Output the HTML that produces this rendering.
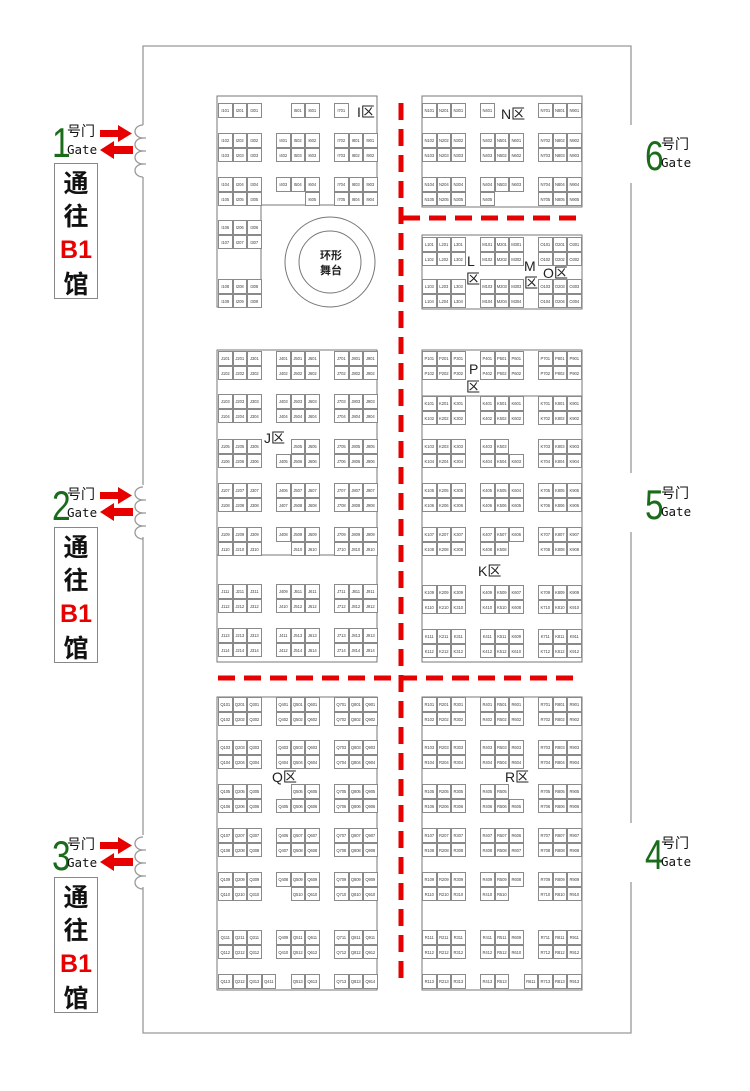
<!DOCTYPE html>
<html><head><meta charset="utf-8">
<style>
*{margin:0;padding:0;box-sizing:border-box}
body{width:750px;height:1091px;background:#fff;position:relative;overflow:hidden;font-family:"Liberation Sans","Noto Sans CJK SC",sans-serif}
svg.bg{position:absolute;left:0;top:0}
.r{position:absolute;display:flex;height:14.5px}
.r i,.r u{display:block;width:14.5px;height:14.5px;flex:none;font-style:normal;text-decoration:none}
.r i{border:0.7px solid #8a8a8a;font-size:4.2px;line-height:13px;text-align:center;color:#444;letter-spacing:-0.1px;background:#fff}
.t{position:absolute;font-size:14px;color:#222;line-height:1;font-family:"Liberation Sans","Noto Sans CJK SC",sans-serif}
.g{position:absolute;color:#1a6b1a;font-size:42px;line-height:1;font-family:"Liberation Sans",sans-serif;transform:scaleX(0.8);transform-origin:left top}
.h{position:absolute;font-size:14px;line-height:1;color:#111;font-family:"Noto Sans CJK SC",sans-serif}
.ga{position:absolute;font-size:12.5px;line-height:1;color:#111;font-family:"DejaVu Sans Mono","Liberation Mono",monospace}
.box{position:absolute;left:54px;width:44px;height:136px;border:1px solid #888;text-align:center;font-family:"Noto Sans CJK SC",sans-serif;font-weight:bold;font-size:25px;line-height:33px;padding-top:2px;color:#111}
.box b{color:#e60000;font-family:"Liberation Sans",sans-serif}
</style></head><body>
<svg class="bg" width="750" height="1091" viewBox="0 0 750 1091">
<g fill="none" stroke="#999" stroke-width="1.3">
<path d="M143 125 V46 H631 V125 M631 183 V473 M631 532 V823 M631 882 V1033 H143 V887 M143 835 V537 M143 485 V177"/>
<g id="bm"><path d="M143 125 a8 6.5 0 0 0 0 13 a8 6.5 0 0 0 0 13 a8 6.5 0 0 0 0 13 a8 6.5 0 0 0 0 13"/><path d="M140 138 h6 M140 151 h6 M140 164 h6"/></g>
<use href="#bm" y="362"/><use href="#bm" y="712"/>
</g>
<g fill="none" stroke="#777" stroke-width="1">
<path d="M217 96 H377 V205 H261 V307 H217 Z"/>
<rect x="422" y="96" width="160" height="111"/>
<rect x="422" y="235" width="160" height="74"/>
<rect x="217" y="350" width="160" height="312"/>
<path d="M217 555 H377"/>
<rect x="422" y="350" width="160" height="312"/>
<path d="M422 396 H582"/>
<rect x="217" y="697" width="160" height="293"/>
<rect x="422" y="697" width="160" height="293"/>
<circle cx="330" cy="262" r="45"/><circle cx="330" cy="262" r="31"/>
</g>
<g stroke="#e60000" stroke-width="5" stroke-dasharray="17 9" fill="none">
<path d="M401 103 V985"/>
<path d="M403 218 H576"/>
<path d="M218 678 H576"/>
</g>
<g fill="#e60000" id="ar">
<path d="M100 130 H118 V125 L132 133.5 L118 142 V137 H100 Z"/>
<path d="M133 146 H114 V141 L100 150 L114 159 V154 H133 Z"/>
</g>
<use href="#ar" y="362"/><use href="#ar" y="712"/>
</svg>

<div class="g" style="left:52px;top:122px">1</div><div class="h" style="left:67px;top:124px">号门</div><div class="ga" style="left:67px;top:144px">Gate</div>
<div class="box" style="top:163px">通<br>往<br><b>B1</b><br>馆</div>
<div class="g" style="left:52px;top:485px">2</div><div class="h" style="left:67px;top:487px">号门</div><div class="ga" style="left:67px;top:507px">Gate</div>
<div class="box" style="top:527px">通<br>往<br><b>B1</b><br>馆</div>
<div class="g" style="left:52px;top:835px">3</div><div class="h" style="left:67px;top:837px">号门</div><div class="ga" style="left:67px;top:857px">Gate</div>
<div class="box" style="top:877px">通<br>往<br><b>B1</b><br>馆</div>

<div class="g" style="left:645px;top:135px">6</div><div class="h" style="left:661px;top:137px">号门</div><div class="ga" style="left:661px;top:157px">Gate</div>
<div class="g" style="left:645px;top:484px">5</div><div class="h" style="left:661px;top:486px">号门</div><div class="ga" style="left:661px;top:506px">Gate</div>
<div class="g" style="left:645px;top:834px">4</div><div class="h" style="left:661px;top:836px">号门</div><div class="ga" style="left:661px;top:856px">Gate</div>

<div class="t" style="left:320px;top:248px;font-size:11px;font-weight:bold;line-height:15px;text-align:center;font-family:'Noto Sans CJK SC',sans-serif">环形<br>舞台</div>
<div class="t" style="left:357px;top:105px">I区</div>
<div class="t" style="left:501px;top:107px">N区</div>
<div class="t" style="left:467px;top:254px">L</div><div class="t" style="left:466px;top:272px">区</div>
<div class="t" style="left:524px;top:259px">M</div><div class="t" style="left:524px;top:276px">区</div>
<div class="t" style="left:543px;top:266px">O区</div>
<div class="t" style="left:264px;top:431px">J区</div>
<div class="t" style="left:469px;top:362px">P</div><div class="t" style="left:466px;top:380px">区</div>
<div class="t" style="left:478px;top:564px">K区</div>
<div class="t" style="left:272px;top:770px">Q区</div>
<div class="t" style="left:505px;top:770px">R区</div>

<!-- I -->
<div class="r" style="left:218px;top:103px"><i>I101</i><i>I201</i><i>I301</i><u></u><u></u><i>I501</i><i>I601</i><u></u><i>I701</i></div>
<div class="r" style="left:218px;top:133px"><i>I102</i><i>I202</i><i>I302</i><u></u><i>I401</i><i>I502</i><i>I602</i><u></u><i>I702</i><i>I801</i><i>I901</i></div>
<div class="r" style="left:218px;top:147.5px"><i>I103</i><i>I203</i><i>I303</i><u></u><i>I402</i><i>I503</i><i>I603</i><u></u><i>I703</i><i>I802</i><i>I902</i></div>
<div class="r" style="left:218px;top:177px"><i>I104</i><i>I204</i><i>I304</i><u></u><i>I403</i><i>I504</i><i>I604</i><u></u><i>I704</i><i>I803</i><i>I903</i></div>
<div class="r" style="left:218px;top:191.5px"><i>I105</i><i>I205</i><i>I305</i><u></u><u></u><u></u><i>I605</i><u></u><i>I705</i><i>I804</i><i>I904</i></div>
<div class="r" style="left:218px;top:220px"><i>I106</i><i>I206</i><i>I306</i></div>
<div class="r" style="left:218px;top:234.5px"><i>I107</i><i>I207</i><i>I307</i></div>
<div class="r" style="left:218px;top:279px"><i>I108</i><i>I208</i><i>I308</i></div>
<div class="r" style="left:218px;top:293.5px"><i>I109</i><i>I209</i><i>I309</i></div>
<!-- N -->
<div class="r" style="left:422px;top:103px"><i>N101</i><i>N201</i><i>N301</i><u></u><i>N401</i><u></u><u></u><u></u><i>N701</i><i>N801</i><i>N901</i></div>
<div class="r" style="left:422px;top:133px"><i>N102</i><i>N202</i><i>N302</i><u></u><i>N402</i><i>N501</i><i>N601</i><u></u><i>N702</i><i>N802</i><i>N902</i></div>
<div class="r" style="left:422px;top:147.5px"><i>N103</i><i>N203</i><i>N303</i><u></u><i>N403</i><i>N502</i><i>N602</i><u></u><i>N703</i><i>N803</i><i>N903</i></div>
<div class="r" style="left:422px;top:177px"><i>N104</i><i>N204</i><i>N304</i><u></u><i>N404</i><i>N503</i><i>N603</i><u></u><i>N704</i><i>N804</i><i>N904</i></div>
<div class="r" style="left:422px;top:191.5px"><i>N105</i><i>N205</i><i>N305</i><u></u><i>N405</i><u></u><u></u><u></u><i>N705</i><i>N805</i><i>N905</i></div>
<!-- LMO -->
<div class="r" style="left:422px;top:237px"><i>L101</i><i>L201</i><i>L301</i><u></u><i>M101</i><i>M201</i><i>M301</i><u></u><i>O101</i><i>O201</i><i>O301</i></div>
<div class="r" style="left:422px;top:251.5px"><i>L102</i><i>L202</i><i>L302</i><u></u><i>M102</i><i>M202</i><i>M302</i><u></u><i>O102</i><i>O202</i><i>O302</i></div>
<div class="r" style="left:422px;top:279px"><i>L103</i><i>L203</i><i>L303</i><u></u><i>M103</i><i>M203</i><i>M303</i><u></u><i>O103</i><i>O203</i><i>O303</i></div>
<div class="r" style="left:422px;top:293.5px"><i>L104</i><i>L204</i><i>L304</i><u></u><i>M104</i><i>M204</i><i>M304</i><u></u><i>O104</i><i>O204</i><i>O304</i></div>
<!-- J -->
<div class="r" style="left:218px;top:351px"><i>J101</i><i>J201</i><i>J301</i><u></u><i>J401</i><i>J501</i><i>J601</i><u></u><i>J701</i><i>J801</i><i>J901</i></div>
<div class="r" style="left:218px;top:365.5px"><i>J102</i><i>J202</i><i>J302</i><u></u><i>J402</i><i>J502</i><i>J602</i><u></u><i>J702</i><i>J802</i><i>J902</i></div>
<div class="r" style="left:218px;top:394px"><i>J103</i><i>J203</i><i>J303</i><u></u><i>J403</i><i>J503</i><i>J603</i><u></u><i>J703</i><i>J803</i><i>J903</i></div>
<div class="r" style="left:218px;top:408.5px"><i>J104</i><i>J204</i><i>J304</i><u></u><i>J404</i><i>J504</i><i>J604</i><u></u><i>J704</i><i>J804</i><i>J904</i></div>
<div class="r" style="left:218px;top:439px"><i>J105</i><i>J205</i><i>J305</i><u></u><u></u><i>J505</i><i>J605</i><u></u><i>J705</i><i>J805</i><i>J905</i></div>
<div class="r" style="left:218px;top:453.5px"><i>J106</i><i>J206</i><i>J306</i><u></u><i>J405</i><i>J506</i><i>J606</i><u></u><i>J706</i><i>J806</i><i>J906</i></div>
<div class="r" style="left:218px;top:483px"><i>J107</i><i>J207</i><i>J307</i><u></u><i>J406</i><i>J507</i><i>J607</i><u></u><i>J707</i><i>J807</i><i>J907</i></div>
<div class="r" style="left:218px;top:497.5px"><i>J108</i><i>J208</i><i>J308</i><u></u><i>J407</i><i>J508</i><i>J608</i><u></u><i>J708</i><i>J808</i><i>J908</i></div>
<div class="r" style="left:218px;top:527px"><i>J109</i><i>J209</i><i>J309</i><u></u><i>J408</i><i>J509</i><i>J609</i><u></u><i>J709</i><i>J809</i><i>J909</i></div>
<div class="r" style="left:218px;top:541.5px"><i>J110</i><i>J210</i><i>J310</i><u></u><u></u><i>J510</i><i>J610</i><u></u><i>J710</i><i>J810</i><i>J910</i></div>
<div class="r" style="left:218px;top:584px"><i>J111</i><i>J211</i><i>J311</i><u></u><i>J409</i><i>J511</i><i>J611</i><u></u><i>J711</i><i>J811</i><i>J911</i></div>
<div class="r" style="left:218px;top:598.5px"><i>J112</i><i>J212</i><i>J312</i><u></u><i>J410</i><i>J512</i><i>J612</i><u></u><i>J712</i><i>J812</i><i>J912</i></div>
<div class="r" style="left:218px;top:628px"><i>J113</i><i>J213</i><i>J313</i><u></u><i>J411</i><i>J513</i><i>J613</i><u></u><i>J713</i><i>J813</i><i>J913</i></div>
<div class="r" style="left:218px;top:642.5px"><i>J114</i><i>J214</i><i>J314</i><u></u><i>J412</i><i>J514</i><i>J614</i><u></u><i>J714</i><i>J814</i><i>J914</i></div>
<!-- P K -->
<div class="r" style="left:422px;top:351px"><i>P101</i><i>P201</i><i>P301</i><u></u><i>P401</i><i>P501</i><i>P601</i><u></u><i>P701</i><i>P801</i><i>P901</i></div>
<div class="r" style="left:422px;top:365.5px"><i>P102</i><i>P202</i><i>P302</i><u></u><i>P402</i><i>P502</i><i>P602</i><u></u><i>P702</i><i>P802</i><i>P902</i></div>
<div class="r" style="left:422px;top:396px"><i>K101</i><i>K201</i><i>K301</i><u></u><i>K401</i><i>K501</i><i>K601</i><u></u><i>K701</i><i>K801</i><i>K901</i></div>
<div class="r" style="left:422px;top:410.5px"><i>K102</i><i>K202</i><i>K302</i><u></u><i>K402</i><i>K502</i><i>K602</i><u></u><i>K702</i><i>K802</i><i>K902</i></div>
<div class="r" style="left:422px;top:439px"><i>K103</i><i>K203</i><i>K303</i><u></u><i>K403</i><i>K503</i><u></u><u></u><i>K703</i><i>K803</i><i>K903</i></div>
<div class="r" style="left:422px;top:453.5px"><i>K104</i><i>K204</i><i>K304</i><u></u><i>K404</i><i>K504</i><i>K603</i><u></u><i>K704</i><i>K804</i><i>K904</i></div>
<div class="r" style="left:422px;top:483px"><i>K105</i><i>K205</i><i>K305</i><u></u><i>K405</i><i>K505</i><i>K604</i><u></u><i>K705</i><i>K805</i><i>K905</i></div>
<div class="r" style="left:422px;top:497.5px"><i>K106</i><i>K206</i><i>K306</i><u></u><i>K406</i><i>K506</i><i>K605</i><u></u><i>K706</i><i>K806</i><i>K906</i></div>
<div class="r" style="left:422px;top:527px"><i>K107</i><i>K207</i><i>K307</i><u></u><i>K407</i><i>K507</i><i>K606</i><u></u><i>K707</i><i>K807</i><i>K907</i></div>
<div class="r" style="left:422px;top:541.5px"><i>K108</i><i>K208</i><i>K308</i><u></u><i>K408</i><i>K508</i><u></u><u></u><i>K708</i><i>K808</i><i>K908</i></div>
<div class="r" style="left:422px;top:585px"><i>K109</i><i>K209</i><i>K309</i><u></u><i>K409</i><i>K509</i><i>K607</i><u></u><i>K709</i><i>K809</i><i>K909</i></div>
<div class="r" style="left:422px;top:599.5px"><i>K110</i><i>K210</i><i>K310</i><u></u><i>K410</i><i>K510</i><i>K608</i><u></u><i>K710</i><i>K810</i><i>K910</i></div>
<div class="r" style="left:422px;top:629px"><i>K111</i><i>K211</i><i>K311</i><u></u><i>K411</i><i>K511</i><i>K609</i><u></u><i>K711</i><i>K811</i><i>K911</i></div>
<div class="r" style="left:422px;top:643.5px"><i>K112</i><i>K212</i><i>K312</i><u></u><i>K412</i><i>K512</i><i>K610</i><u></u><i>K712</i><i>K812</i><i>K912</i></div>
<!-- Q -->
<div class="r" style="left:218px;top:697px"><i>Q101</i><i>Q201</i><i>Q301</i><u></u><i>Q401</i><i>Q501</i><i>Q601</i><u></u><i>Q701</i><i>Q801</i><i>Q901</i></div>
<div class="r" style="left:218px;top:711.5px"><i>Q102</i><i>Q202</i><i>Q302</i><u></u><i>Q402</i><i>Q502</i><i>Q602</i><u></u><i>Q702</i><i>Q802</i><i>Q902</i></div>
<div class="r" style="left:218px;top:740px"><i>Q103</i><i>Q203</i><i>Q303</i><u></u><i>Q403</i><i>Q503</i><i>Q603</i><u></u><i>Q703</i><i>Q803</i><i>Q903</i></div>
<div class="r" style="left:218px;top:754.5px"><i>Q104</i><i>Q204</i><i>Q304</i><u></u><i>Q404</i><i>Q504</i><i>Q604</i><u></u><i>Q704</i><i>Q804</i><i>Q904</i></div>
<div class="r" style="left:218px;top:784px"><i>Q105</i><i>Q205</i><i>Q305</i><u></u><u></u><i>Q505</i><i>Q605</i><u></u><i>Q705</i><i>Q805</i><i>Q905</i></div>
<div class="r" style="left:218px;top:798.5px"><i>Q106</i><i>Q206</i><i>Q306</i><u></u><i>Q405</i><i>Q506</i><i>Q606</i><u></u><i>Q706</i><i>Q806</i><i>Q906</i></div>
<div class="r" style="left:218px;top:828px"><i>Q107</i><i>Q207</i><i>Q307</i><u></u><i>Q406</i><i>Q507</i><i>Q607</i><u></u><i>Q707</i><i>Q807</i><i>Q907</i></div>
<div class="r" style="left:218px;top:842.5px"><i>Q108</i><i>Q208</i><i>Q308</i><u></u><i>Q407</i><i>Q508</i><i>Q608</i><u></u><i>Q708</i><i>Q808</i><i>Q908</i></div>
<div class="r" style="left:218px;top:872px"><i>Q109</i><i>Q209</i><i>Q309</i><u></u><i>Q408</i><i>Q509</i><i>Q609</i><u></u><i>Q709</i><i>Q809</i><i>Q909</i></div>
<div class="r" style="left:218px;top:886.5px"><i>Q110</i><i>Q210</i><i>Q310</i><u></u><u></u><i>Q510</i><i>Q610</i><u></u><i>Q710</i><i>Q810</i><i>Q910</i></div>
<div class="r" style="left:218px;top:930px"><i>Q111</i><i>Q211</i><i>Q311</i><u></u><i>Q409</i><i>Q511</i><i>Q611</i><u></u><i>Q711</i><i>Q811</i><i>Q911</i></div>
<div class="r" style="left:218px;top:944.5px"><i>Q112</i><i>Q212</i><i>Q312</i><u></u><i>Q410</i><i>Q512</i><i>Q612</i><u></u><i>Q712</i><i>Q812</i><i>Q912</i></div>
<div class="r" style="left:218px;top:974px"><i>Q113</i><i>Q212</i><i>Q313</i><i>Q411</i><u></u><i>Q513</i><i>Q613</i><u></u><i>Q713</i><i>Q813</i><i>Q914</i></div>
<!-- R -->
<div class="r" style="left:422px;top:697px"><i>R101</i><i>R201</i><i>R301</i><u></u><i>R401</i><i>R501</i><i>R601</i><u></u><i>R701</i><i>R801</i><i>R901</i></div>
<div class="r" style="left:422px;top:711.5px"><i>R102</i><i>R202</i><i>R302</i><u></u><i>R402</i><i>R502</i><i>R602</i><u></u><i>R702</i><i>R802</i><i>R902</i></div>
<div class="r" style="left:422px;top:740px"><i>R103</i><i>R203</i><i>R303</i><u></u><i>R403</i><i>R503</i><i>R603</i><u></u><i>R703</i><i>R803</i><i>R903</i></div>
<div class="r" style="left:422px;top:754.5px"><i>R104</i><i>R204</i><i>R304</i><u></u><i>R404</i><i>R504</i><i>R604</i><u></u><i>R704</i><i>R804</i><i>R904</i></div>
<div class="r" style="left:422px;top:784px"><i>R105</i><i>R205</i><i>R305</i><u></u><i>R405</i><i>R505</i><u></u><u></u><i>R705</i><i>R805</i><i>R905</i></div>
<div class="r" style="left:422px;top:798.5px"><i>R106</i><i>R206</i><i>R306</i><u></u><i>R406</i><i>R506</i><i>R605</i><u></u><i>R706</i><i>R806</i><i>R906</i></div>
<div class="r" style="left:422px;top:828px"><i>R107</i><i>R207</i><i>R307</i><u></u><i>R407</i><i>R507</i><i>R606</i><u></u><i>R707</i><i>R807</i><i>R907</i></div>
<div class="r" style="left:422px;top:842.5px"><i>R108</i><i>R208</i><i>R308</i><u></u><i>R408</i><i>R508</i><i>R607</i><u></u><i>R708</i><i>R808</i><i>R908</i></div>
<div class="r" style="left:422px;top:872px"><i>R109</i><i>R209</i><i>R309</i><u></u><i>R409</i><i>R509</i><i>R608</i><u></u><i>R709</i><i>R809</i><i>R909</i></div>
<div class="r" style="left:422px;top:886.5px"><i>R110</i><i>R210</i><i>R310</i><u></u><i>R410</i><i>R510</i><u></u><u></u><i>R710</i><i>R810</i><i>R910</i></div>
<div class="r" style="left:422px;top:930px"><i>R111</i><i>R211</i><i>R311</i><u></u><i>R411</i><i>R511</i><i>R609</i><u></u><i>R711</i><i>R811</i><i>R911</i></div>
<div class="r" style="left:422px;top:944.5px"><i>R112</i><i>R212</i><i>R312</i><u></u><i>R412</i><i>R512</i><i>R610</i><u></u><i>R712</i><i>R812</i><i>R912</i></div>
<div class="r" style="left:422px;top:974px"><i>R113</i><i>R213</i><i>R313</i><u></u><i>R413</i><i>R513</i><u></u><i>R611</i><i>R713</i><i>R813</i><i>R913</i></div>
</body></html>
